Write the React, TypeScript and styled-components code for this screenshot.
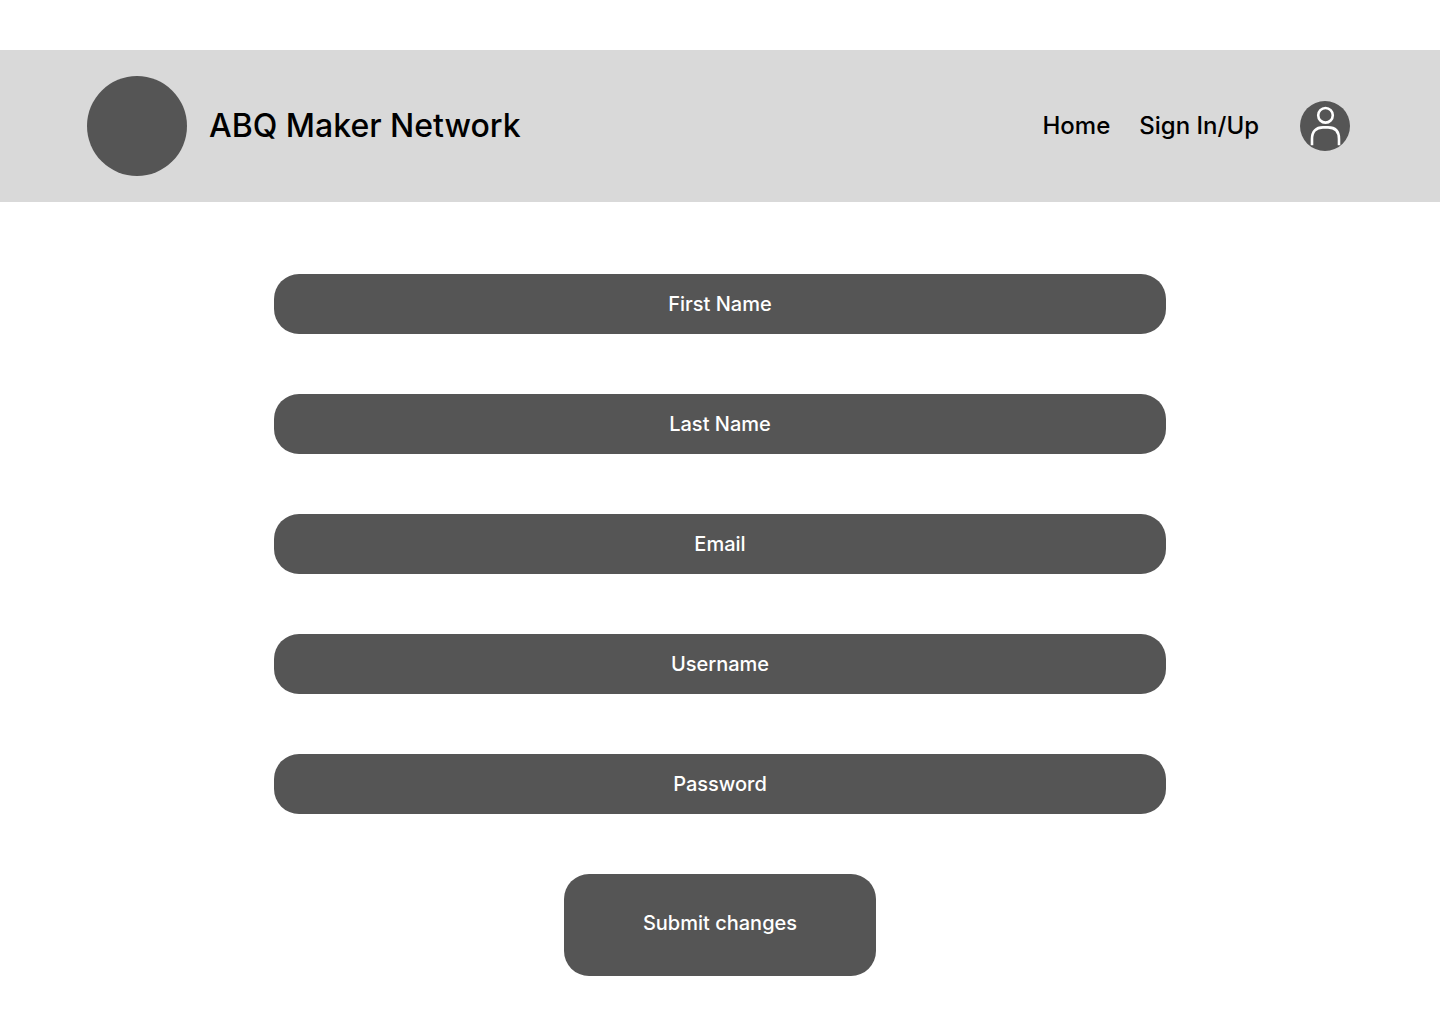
import React from "react";
import styled, { createGlobalStyle } from "styled-components";

const GlobalStyle = createGlobalStyle`
  *, *::before, *::after { box-sizing: border-box; }
  body {
    margin: 0;
    background: #fff;
    color: #000;
    font-family: Inter, "Liberation Sans", sans-serif;
    font-weight: 500;
  }
`;

const Page = styled.div`
  padding: 50px 0 48px;
`;

const Header = styled.header`
  display: flex;
  align-items: center;
  justify-content: space-between;
  padding: 26px 90px 26px 87px;
  background: #d9d9d9;
`;

const Brand = styled.a`
  display: flex;
  align-items: center;
  gap: 22px;
  color: inherit;
  text-decoration: none;
`;

const Logo = styled.span`
  width: 100px;
  height: 100px;
  border-radius: 50%;
  background: #555;
`;

const BrandName = styled.span`
  font-size: 32px;
  line-height: 40px;
`;

const Nav = styled.nav`
  display: flex;
  align-items: center;
  gap: 29px;
`;

const NavLink = styled.a`
  color: inherit;
  font-size: 24px;
  line-height: 30px;
  text-decoration: none;
`;

const ProfileButton = styled.button`
  width: 50px;
  height: 50px;
  margin-left: 12px;
  padding: 0;
  border: 0;
  border-radius: 50%;
  background: #555;
  cursor: pointer;

  svg { display: block; }
`;

const Form = styled.form`
  display: flex;
  flex-direction: column;
  align-items: center;
  gap: 60px;
  width: 62%;
  margin: 72px auto 0;
`;

const Field = styled.input`
  width: 100%;
  height: 60px;
  padding: 0 24px;
  border: 0;
  border-radius: 25px;
  background: #555;
  color: #fff;
  font: inherit;
  font-size: 20px;
  text-align: center;

  &::placeholder { color: #fff; opacity: 1; }
`;

const Submit = styled.button`
  padding: 37px 79px 41px;
  border: 0;
  border-radius: 25px;
  background: #555;
  color: #fff;
  font: inherit;
  font-size: 20px;
  line-height: 24px;
  cursor: pointer;
`;

const fields = [
  { name: "firstName", label: "First Name", type: "text" },
  { name: "lastName", label: "Last Name", type: "text" },
  { name: "email", label: "Email", type: "email" },
  { name: "username", label: "Username", type: "text" },
  { name: "password", label: "Password", type: "password" },
];

export default function App() {
  return (
    <Page>
      <GlobalStyle />
      <Header>
        <Brand href="#">
          <Logo />
          <BrandName>ABQ Maker Network</BrandName>
        </Brand>
        <Nav>
          <NavLink href="#home">Home</NavLink>
          <NavLink href="#sign-in">Sign In/Up</NavLink>
          <ProfileButton type="button" aria-label="Profile">
            <svg width="50" height="50" viewBox="0 0 50 50" fill="none" stroke="#fff" strokeWidth="2.6">
              <circle cx="25.5" cy="14.3" r="7.3" />
              <path d="M12 44.2V38C12 30.5 16 26.4 23 26.4H28C35 26.4 39 30.5 39 38V44.2" />
            </svg>
          </ProfileButton>
        </Nav>
      </Header>
      <Form onSubmit={(event: React.FormEvent) => event.preventDefault()}>
        {fields.map(({ name, label, type }) => (
          <Field key={name} name={name} type={type} placeholder={label} aria-label={label} />
        ))}
        <Submit type="submit">Submit changes</Submit>
      </Form>
    </Page>
  );
}
